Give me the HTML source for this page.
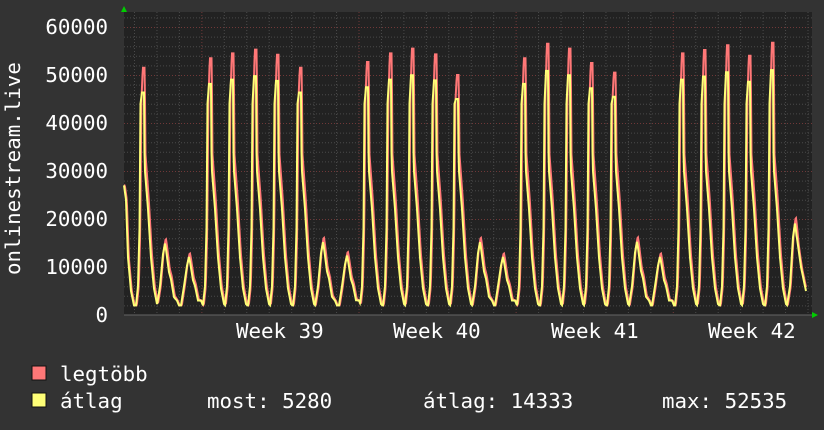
<!DOCTYPE html>
<html><head><meta charset="utf-8"><style>
html,body{margin:0;padding:0;background:#333;}
svg{display:block}
text{font-family:"DejaVu Sans Mono","Liberation Mono",monospace;fill:#fff;font-size:20.8px}
</style></head><body>
<svg id="s" width="824" height="430" xmlns="http://www.w3.org/2000/svg">
<rect x="0" y="0" width="824" height="430" fill="#333"/>
<rect x="124" y="12" width="688" height="303" fill="#222"/>
<g id="grid"></g>
<g id="data"></g>
<polygon points="121,12 127,12 124,6" fill="#0c0"/>
<polygon points="812,312 812,318 818,315" fill="#0c0"/>
<line x1="124" y1="315" x2="812" y2="315" stroke="#666" stroke-width="1"/>
<text x="108" y="34" text-anchor="end">60000</text>
<text x="108" y="82" text-anchor="end">50000</text>
<text x="108" y="130" text-anchor="end">40000</text>
<text x="108" y="178" text-anchor="end">30000</text>
<text x="108" y="226" text-anchor="end">20000</text>
<text x="108" y="274" text-anchor="end">10000</text>
<text x="108" y="322" text-anchor="end">0</text>
<text transform="translate(20,275) rotate(-90)">onlinestream.live</text>
<text x="236" y="338">Week 39</text>
<text x="393" y="338">Week 40</text>
<text x="551" y="338">Week 41</text>
<text x="708" y="338">Week 42</text>
<rect x="32" y="366" width="14" height="14" fill="#ff7777" stroke="#111"/>
<rect x="32" y="393" width="14" height="14" fill="#ffff77" stroke="#111"/>
<text x="60" y="381">legtöbb</text>
<text x="60" y="408">átlag</text>
<text x="207" y="408">most: 5280</text>
<text x="423" y="408">átlag: 14333</text>
<text x="662" y="408">max: 52535</text>
</svg>
<script>
var NS="http://www.w3.org/2000/svg";
var g=document.getElementById('grid'),d=document.getElementById('data');
function ln(x1,y1,x2,y2,c){var l=document.createElementNS(NS,'line');l.setAttribute('x1',x1);l.setAttribute('y1',y1);l.setAttribute('x2',x2);l.setAttribute('y2',y2);l.setAttribute('stroke',c);l.setAttribute('stroke-dasharray','1,2');g.appendChild(l);}
for(var v=2000;v<=62000;v+=2000){var y=315-v*0.0048+0.5;ln(124,y,812,y,(v%10000==0)?'#703838':'#4a4a4a');}
for(var x=134.5;x<812;x+=22.45){var maj=[202,359,517,674].some(function(m){return Math.abs(m-x)<4});ln(x,12,x,315,maj?'#703838':'#4a4a4a');}
var peaks=[[143,51500],[165,16000],[189,13000],[210,53500],[232,54500],[255,55300],[277,54200],[300,51500],[323,16300],[347,13300],[367,52700],[390,54500],[412,55500],[435,54300],[457,50000],[480,16300],[503,13000],[524,53500],[547,56500],[569,55500],[591,52500],[614,50500],[637,16400],[660,13000],[682,54500],[704,55200],[727,56200],[749,54000],[772,56700],[795,20500]];
function interp(pts,x){if(x<=pts[0][0])return pts[0][1];for(var i=1;i<pts.length;i++){if(x<=pts[i][0]){var a=pts[i-1],b=pts[i];return a[1]+(b[1]-a[1])*(x-a[0])/(b[0]-a[0]);}}return pts[pts.length-1][1];}
function val(x,avg){var v=2000;
 if(x<134){v=Math.max(2000,interp([[124,27000],[126,24000],[128,12000],[131,5000],[134,2000]],x));}
 for(var i=0;i<peaks.length;i++){var p=peaks[i][0],h=peaks[i][1];var f=avg?0.92:1;
  var dx=x-p,w;
  if(h>30000){
   if(dx<-7||dx>16)continue;
   var hh=avg?h*0.9:h;
   w=interp([[-7,2000],[-5,6000],[-3.5,18000],[-2.5,44000],[-1,hh],[1,hh],[1.5,34000],[5,24000],[8,13000],[11,6000],[14,2500],[16,2000]],dx)*(dx>1.5?f:1);
  }else{
   if(dx<-8||dx>14)continue;
   var hh=avg?h*0.93:h;
   w=interp([[-8,2000],[-5,6000],[-2,hh*0.85],[0,hh],[1,hh*0.92],[4,hh*0.6],[6,hh*0.5],[9,hh*0.25],[12,3000],[14,2000]],dx);
  }
  if(i==29&&x>=797)w=Math.max(w,interp([[797,16000],[801,10000],[806,5000]],x));
  v=Math.max(v,w);}
 return v;}
function path(avg,col,off){var s='';for(var x=124;x<=806;x+=0.5){var y=315-val(x-off,avg)*0.0048;s+=(s?'L':'M')+x+','+y.toFixed(1);}
 var p=document.createElementNS(NS,'path');p.setAttribute('d',s);p.setAttribute('fill','none');p.setAttribute('stroke',col);p.setAttribute('stroke-width','2');d.appendChild(p);}
path(false,'#ff7777',0.8);path(true,'#ffff77',0);
</script>
</body></html>
